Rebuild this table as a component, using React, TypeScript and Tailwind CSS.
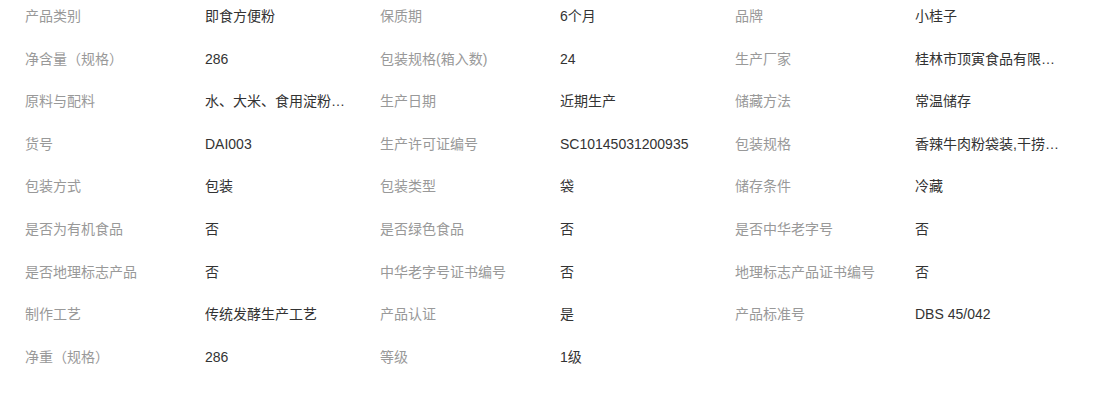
import React from "react";

const rows: [string, string][][] = [
  [["产品类别", "即食方便粉"], ["保质期", "6个月"], ["品牌", "小桂子"]],
  [["净含量（规格）", "286"], ["包装规格(箱入数)", "24"], ["生产厂家", "桂林市顶寅食品有限公司"]],
  [["原料与配料", "水、大米、食用淀粉、调味料"], ["生产日期", "近期生产"], ["储藏方法", "常温储存"]],
  [["货号", "DAI003"], ["生产许可证编号", "SC10145031200935"], ["包装规格", "香辣牛肉粉袋装,干捞米粉"]],
  [["包装方式", "包装"], ["包装类型", "袋"], ["储存条件", "冷藏"]],
  [["是否为有机食品", "否"], ["是否绿色食品", "否"], ["是否中华老字号", "否"]],
  [["是否地理标志产品", "否"], ["中华老字号证书编号", "否"], ["地理标志产品证书编号", "否"]],
  [["制作工艺", "传统发酵生产工艺"], ["产品认证", "是"], ["产品标准号", "DBS 45/042"]],
  [["净重（规格）", "286"], ["等级", "1级"]],
];

export default function App() {
  return (
    <div
      className="w-[1097px] h-[396px] bg-white overflow-hidden pl-[25px] text-[14px]"
      style={{ fontFamily: '"Liberation Sans", "Noto Sans CJK SC", sans-serif' }}
    >
      {rows.map((row, i) => (
        <div key={i} className="flex h-[42.6px] pt-[5px] leading-[22px]">
          {row.map(([label, value], j) => (
            <div key={j} className="flex w-[355px]">
              <div className="w-[180px] text-[#999999] whitespace-nowrap">{label}</div>
              <div className="w-[175px]">
                <div className="max-w-[145px] truncate text-[#333333]">{value}</div>
              </div>
            </div>
          ))}
        </div>
      ))}
    </div>
  );
}
